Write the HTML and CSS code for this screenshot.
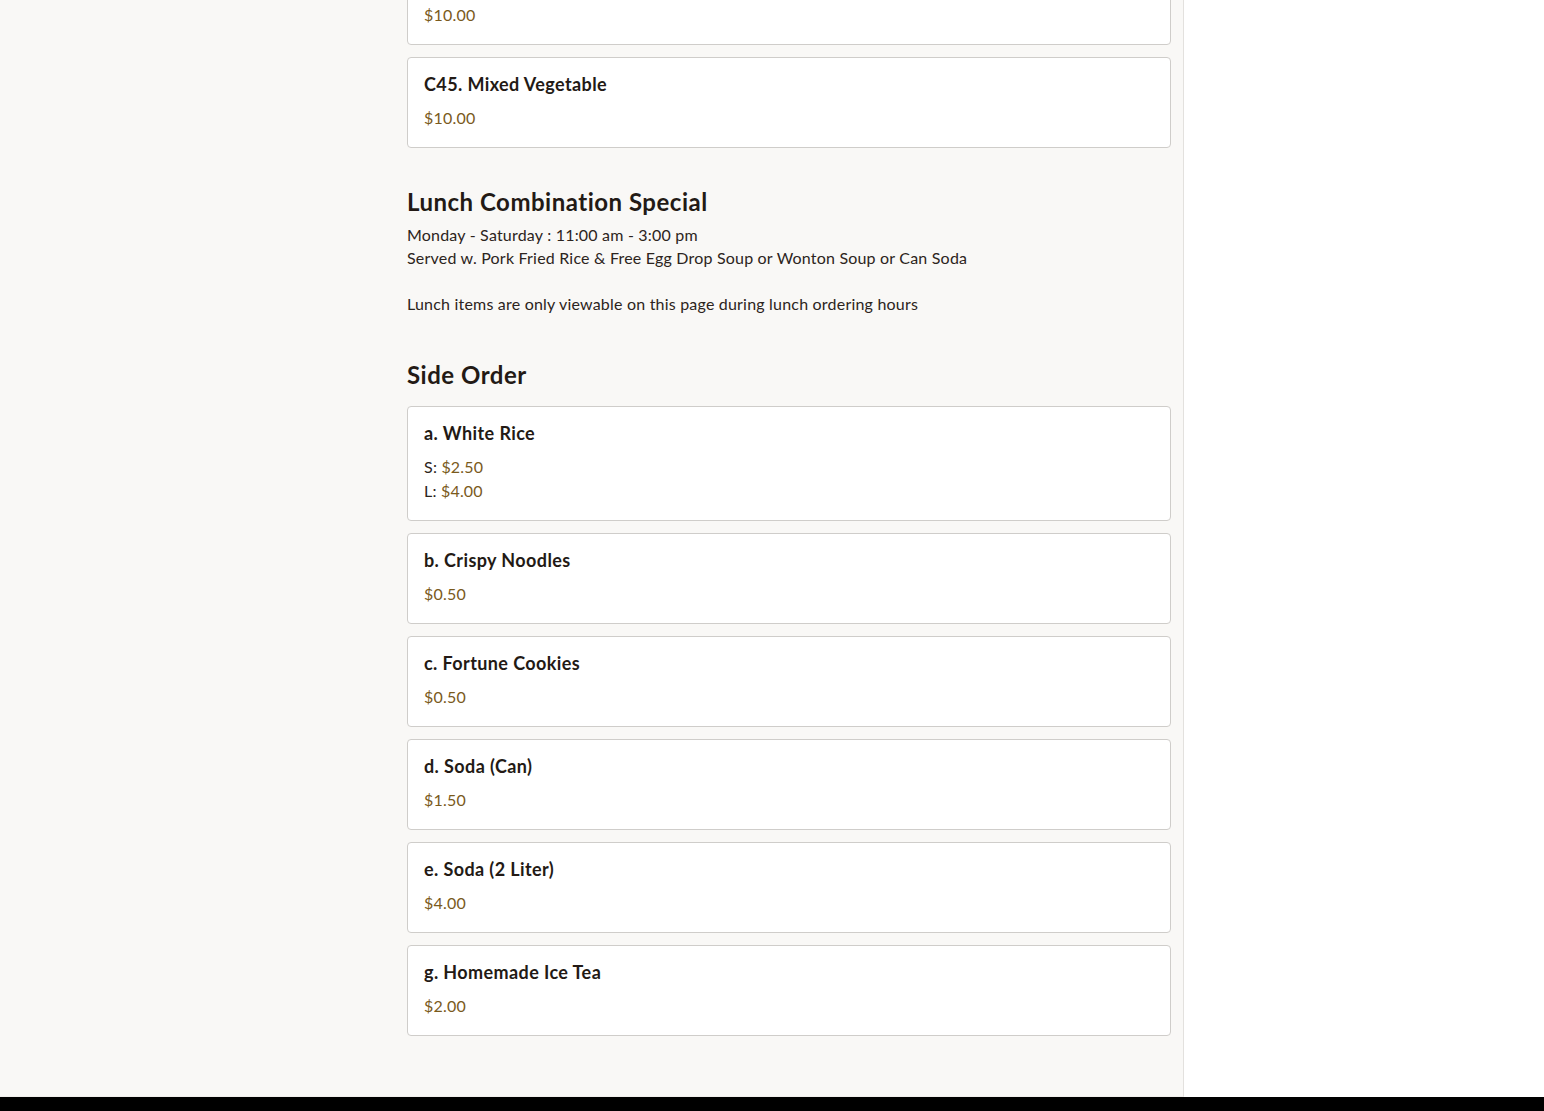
FILE: index.html
```html
<!DOCTYPE html>
<html lang="en">
<head>
<meta charset="utf-8">
<title>Menu</title>
<link rel="stylesheet" href="styles.css">
</head>
<body>
<div class="layout">
  <main class="menu">
    <div class="column">
      <div class="items items-top">
        <div class="card">
          <div class="price">$10.00</div>
        </div>
        <div class="card">
          <h3 class="item-name">C45. Mixed Vegetable</h3>
          <div class="price">$10.00</div>
        </div>
      </div>

      <section class="section">
        <h2 class="section-title">Lunch Combination Special</h2>
        <p class="section-desc">Monday - Saturday : 11:00 am - 3:00 pm<br>Served w. Pork Fried Rice &amp; Free Egg Drop Soup or Wonton Soup or Can Soda<br><br>Lunch items are only viewable on this page during lunch ordering hours</p>
      </section>

      <section class="section">
        <h2 class="section-title">Side Order</h2>
        <div class="items">
          <div class="card">
            <h3 class="item-name">a. White Rice</h3>
            <div class="price-row">S: <span class="price">$2.50</span></div>
            <div class="price-row">L: <span class="price">$4.00</span></div>
          </div>
          <div class="card">
            <h3 class="item-name">b. Crispy Noodles</h3>
            <div class="price">$0.50</div>
          </div>
          <div class="card">
            <h3 class="item-name">c. Fortune Cookies</h3>
            <div class="price">$0.50</div>
          </div>
          <div class="card">
            <h3 class="item-name">d. Soda (Can)</h3>
            <div class="price">$1.50</div>
          </div>
          <div class="card">
            <h3 class="item-name">e. Soda (2 Liter)</h3>
            <div class="price">$4.00</div>
          </div>
          <div class="card">
            <h3 class="item-name">g. Homemade Ice Tea</h3>
            <div class="price">$2.00</div>
          </div>
        </div>
      </section>
    </div>
  </main>
  <aside class="sidebar"></aside>
</div>
<footer class="footer"></footer>
</body>
</html>
```

FILE: styles.css
```css
* { box-sizing: border-box; }

html, body {
  margin: 0;
  padding: 0;
}

body {
  font-family: Lato, "Noto Sans", sans-serif;
  font-size: 16px;
  letter-spacing: 0.2px;
  color: #2c2420;
  background: #ffffff;
  overflow: hidden;
}

.layout {
  display: flex;
  align-items: stretch;
}

.menu {
  width: 1184px;
  flex: none;
  background: #f9f8f6;
  border-right: 1px solid #e3e1de;
  border-bottom: 1px solid #f1efec;
  padding: 0 12px 60px 407px;
}

.sidebar {
  flex: 1;
  background: #ffffff;
}

.column {
  width: 764px;
}

.items {
  display: flex;
  flex-direction: column;
  gap: 12px;
}

.items-top {
  margin-top: -13px;
}

.card {
  background: #ffffff;
  border: 1px solid #cfcdca;
  border-radius: 4px;
  padding: 15px 16px 17px;
}

.item-name {
  margin: 0 0 11px;
  font-size: 18px;
  line-height: 22px;
  font-weight: 700;
  letter-spacing: 0.4px;
  color: #231a15;
}

.price {
  color: #7a5a1c;
  line-height: 24px;
}

.price-row {
  line-height: 24px;
  color: #2c2420;
}

.section {
  margin-top: 40px;
}

.section + .section {
  margin-top: 46px;
}

.section-title {
  margin: 0 0 6px;
  font-size: 24px;
  line-height: 28.8px;
  font-weight: 700;
  letter-spacing: 0.5px;
  color: #231a15;
}

.section-desc {
  margin: 0;
  line-height: 23px;
  font-size: 16px;
  color: #2c2420;
}

.section-title + .items {
  margin-top: 16px;
}

.footer {
  height: 120px;
  background: #000000;
}
```
